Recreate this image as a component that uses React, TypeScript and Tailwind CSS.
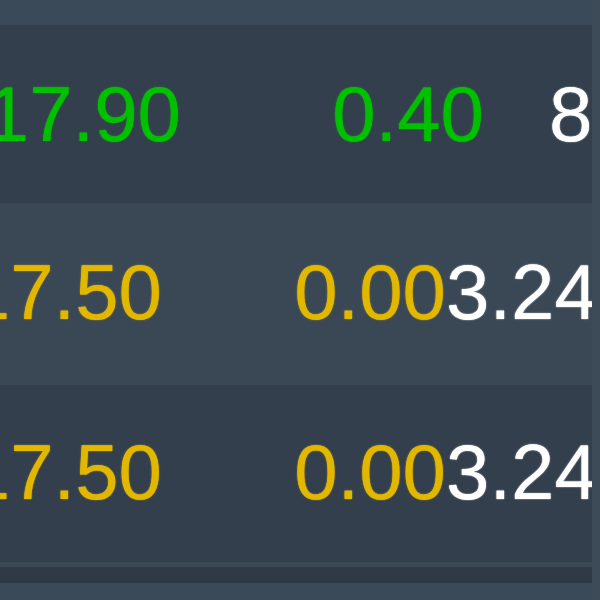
const rows = [
  { price: '17.90', change: '0.40', pct: '8.', color: 'text-[#00c000]', bg: 'bg-[#343f4d]', h: 'h-[178px]' },
  { price: '17.50', change: '0.00', pct: '3.24', color: 'text-[#e2b700]', bg: 'bg-[#3a4856]', h: 'h-[182px]' },
  { price: '17.50', change: '0.00', pct: '3.24', color: 'text-[#e2b700]', bg: 'bg-[#343f4d]', h: 'h-[177px]' },
]

export default function App() {
  return (
    <div className="w-[600px] h-[600px] flex bg-[#3a4957] overflow-hidden font-['Liberation_Sans',Arial,sans-serif]">
      <div className="flex-1 flex flex-col overflow-hidden">
        {/* top band */}
        <div className="h-[25px] bg-[#3b4a58]" />

        {/* first row has its own column widths */}
        <div className={`${rows[0].h} ${rows[0].bg} flex items-center text-[78px] leading-none whitespace-nowrap -ml-[60px] [text-shadow:0_0_1.5px_currentColor]`}>
          <div className={`w-[241px] shrink-0 text-right ${rows[0].color}`}>{rows[0].price}</div>
          <div className={`w-[303px] shrink-0 text-right ${rows[0].color}`}>{rows[0].change}</div>
          <div className="pl-[65px] shrink-0 text-white">{rows[0].pct}</div>
        </div>

        {rows.slice(1).map((r, i) => (
          <div
            key={i}
            className={`${r.h} ${r.bg} flex items-center text-[78px] leading-none whitespace-nowrap -ml-[60px] pb-1 [text-shadow:0_0_1.5px_currentColor]`}
          >
            <div className={`w-[222px] shrink-0 text-right ${r.color}`}>{r.price}</div>
            <div className={`w-[284px] shrink-0 text-right ${r.color}`}>{r.change}</div>
            <div className="shrink-0 text-white">{r.pct}</div>
          </div>
        ))}

        {/* footer strips */}
        <div className="h-[5px] bg-[#3a4a55]" />
        <div className="h-[16px] bg-[#2f3a46]" />
        <div className="flex-1 bg-[#3a4a58]" />
      </div>
      <div className="w-2 shrink-0 bg-[#3d4b59]" />
    </div>
  )
}
